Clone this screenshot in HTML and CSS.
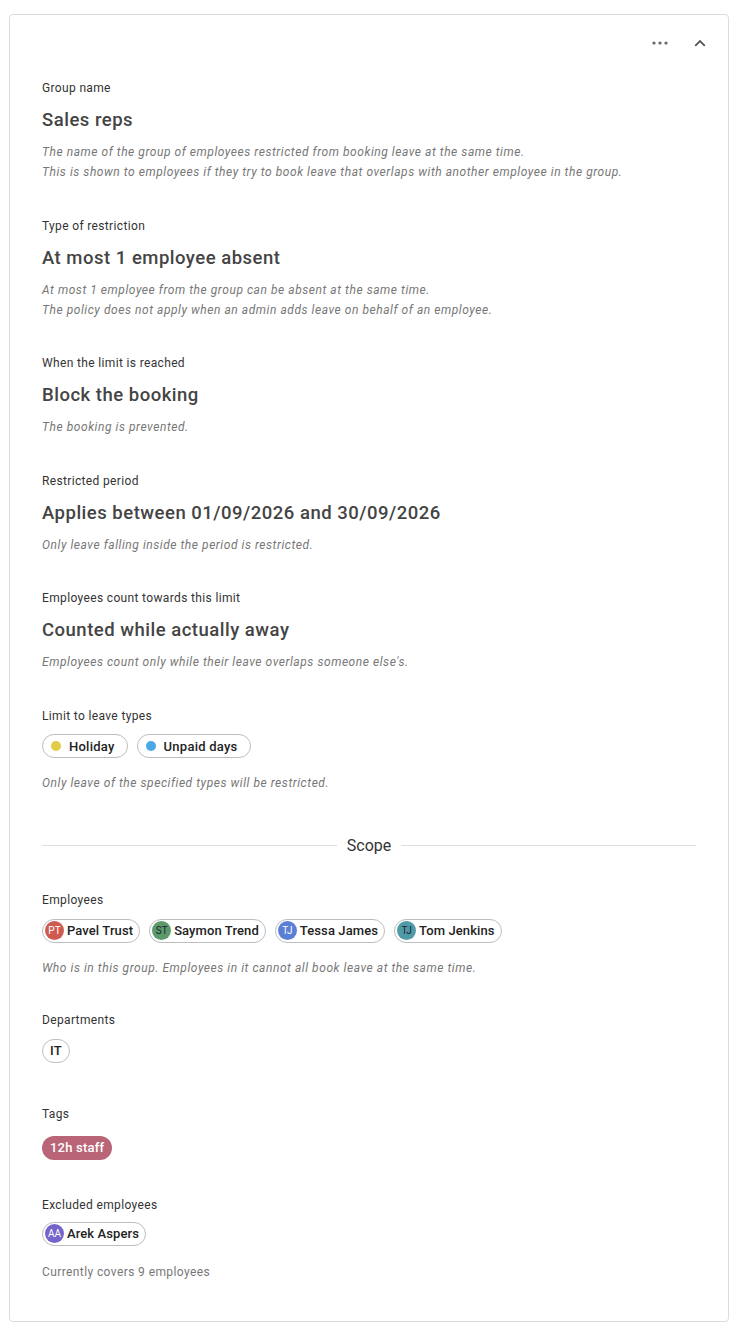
FILE: index.html
```html
<!DOCTYPE html>
<html>
<head>
<meta charset="utf-8">
<link rel="stylesheet" href="styles.css">
</head>
<body>
<div class="card">
  <div class="card-head">
    <button class="icon-btn" aria-label="More">
      <svg width="16" height="4" viewBox="0 0 16 4"><circle cx="2" cy="2" r="1.6" fill="#666"/><circle cx="8" cy="2" r="1.6" fill="#666"/><circle cx="14" cy="2" r="1.6" fill="#666"/></svg>
    </button>
    <button class="icon-btn" aria-label="Collapse">
      <svg width="12" height="8" viewBox="0 0 12 8"><path d="M1.2 6.8 L6 2 L10.8 6.8" fill="none" stroke="#555" stroke-width="1.8"/></svg>
    </button>
  </div>

  <section class="field">
    <div class="label">Group name</div>
    <div class="value">Sales reps</div>
    <div class="help">The name of the group of employees restricted from booking leave at the same time.<br>This is shown to employees if they try to book leave that overlaps with another employee in the group.</div>
  </section>

  <section class="field">
    <div class="label">Type of restriction</div>
    <div class="value">At most 1 employee absent</div>
    <div class="help">At most 1 employee from the group can be absent at the same time.<br>The policy does not apply when an admin adds leave on behalf of an employee.</div>
  </section>

  <section class="field">
    <div class="label">When the limit is reached</div>
    <div class="value">Block the booking</div>
    <div class="help">The booking is prevented.</div>
  </section>

  <section class="field">
    <div class="label">Restricted period</div>
    <div class="value">Applies between 01/09/2026 and 30/09/2026</div>
    <div class="help">Only leave falling inside the period is restricted.</div>
  </section>

  <section class="field">
    <div class="label">Employees count towards this limit</div>
    <div class="value">Counted while actually away</div>
    <div class="help">Employees count only while their leave overlaps someone else's.</div>
  </section>

  <section class="field">
    <div class="label">Limit to leave types</div>
    <div class="chips">
      <span class="chip"><span class="dot dot-yellow"></span>Holiday</span>
      <span class="chip"><span class="dot dot-blue"></span>Unpaid days</span>
    </div>
    <div class="help help-after-chips">Only leave of the specified types will be restricted.</div>
  </section>

  <div class="divider"><span>Scope</span></div>

  <section class="field">
    <div class="label">Employees</div>
    <div class="chips">
      <span class="chip chip-person"><span class="avatar av-red">PT</span>Pavel Trust</span>
      <span class="chip chip-person"><span class="avatar av-green">ST</span>Saymon Trend</span>
      <span class="chip chip-person"><span class="avatar av-blue">TJ</span>Tessa James</span>
      <span class="chip chip-person"><span class="avatar av-teal">TJ</span>Tom Jenkins</span>
    </div>
    <div class="help help-after-people">Who is in this group. Employees in it cannot all book leave at the same time.</div>
  </section>

  <section class="field field-loose">
    <div class="label">Departments</div>
    <div class="chips">
      <span class="chip chip-plain">IT</span>
    </div>
  </section>

  <section class="field field-tags">
    <div class="label">Tags</div>
    <div class="chips chips-tag">
      <span class="tag">12h staff</span>
    </div>
  </section>

  <section class="field field-last">
    <div class="label">Excluded employees</div>
    <div class="chips chips-excluded">
      <span class="chip chip-person"><span class="avatar av-purple">AA</span>Arek Aspers</span>
    </div>
    <div class="note">Currently covers 9 employees</div>
  </section>
</div>
</body>
</html>
```

FILE: styles.css
```css
* { box-sizing: border-box; }

html, body {
  margin: 0;
  padding: 0;
  background: #ffffff;
}

body {
  font-family: Roboto, "Liberation Sans", Arial, sans-serif;
  color: #333;
  padding: 14px 11px 18px 9px;
}

.card {
  border: 1px solid #dcdcdc;
  border-radius: 4px;
  padding: 12px 32px 39px 32px;
  background: #fff;
}

.card-head {
  display: flex;
  justify-content: flex-end;
  align-items: center;
  gap: 8px;
  height: 32px;
  margin-right: -20px;
}

.icon-btn {
  width: 32px;
  height: 32px;
  padding: 0;
  border: 0;
  background: transparent;
  display: flex;
  align-items: center;
  justify-content: center;
}

.field {
  margin-top: 35.6px;
}

.card-head + .field {
  margin-top: 21px;
}

.field-loose {
  margin-top: 34px;
}

.field-loose + .field {
  margin-top: 43px;
}

.field-tags + .field {
  margin-top: 37px;
}

.label {
  font-size: 12px;
  line-height: 16px;
  color: #333;
  letter-spacing: 0.35px;
}

.value {
  margin-top: 12px;
  font-size: 18.5px;
  line-height: 24px;
  font-weight: 500;
  color: #444;
  letter-spacing: 0.5px;
}

.help {
  margin-top: 10px;
  font-size: 12px;
  line-height: 20px;
  font-style: italic;
  color: #777;
  letter-spacing: 0.55px;
}

.help-after-chips {
  margin-top: 15px;
}

.help-after-people {
  margin-top: 15.5px;
}

.chips {
  margin-top: 10.5px;
  display: flex;
  flex-wrap: wrap;
  gap: 9px;
}

.chips-tag {
  margin-top: 14px;
}

.chips-excluded {
  margin-top: 9px;
}

.chip {
  display: inline-flex;
  align-items: center;
  height: 24px;
  border: 1px solid #bdbdbd;
  border-radius: 12px;
  padding: 0 12px 0 8px;
  font-size: 13px;
  font-weight: 500;
  color: #222;
  letter-spacing: 0.25px;
  background: #fff;
}

.dot {
  width: 10px;
  height: 10px;
  border-radius: 50%;
  margin-right: 8px;
}

.dot-yellow { background: #e3cc45; }
.dot-blue { background: #4aa8e6; }

.chip-person {
  padding: 0 6px 0 2px;
  letter-spacing: 0.1px;
}

.avatar {
  width: 19px;
  height: 19px;
  border-radius: 50%;
  display: inline-flex;
  align-items: center;
  justify-content: center;
  font-size: 10px;
  font-weight: 400;
  color: #fff;
  margin-right: 3px;
  letter-spacing: 0;
}

.av-red { background: #cf5a4f; }
.av-green { background: #5c9a6c; color: #223; }
.av-blue { background: #5b7fd6; }
.av-teal { background: #4f9aa6; color: #223; }
.av-purple { background: #7565c8; }

.chip-plain {
  padding: 0 7px;
}

.tag {
  display: inline-flex;
  align-items: center;
  height: 24px;
  border-radius: 12px;
  padding: 0 8px;
  background: #b96577;
  color: #fff;
  font-size: 13px;
  font-weight: 500;
  letter-spacing: 0.2px;
}

.divider {
  margin-top: 40.5px;
  display: flex;
  align-items: center;
  height: 24px;
  gap: 10px;
}

.divider::before,
.divider::after {
  content: "";
  flex: 1;
  height: 1px;
  background: #dedede;
}

.divider span {
  font-size: 16px;
  color: #333;
}

.divider + .field {
  margin-top: 34.5px;
}

.note {
  margin-top: 16.5px;
  font-size: 12px;
  line-height: 20px;
  color: #777;
  letter-spacing: 0.4px;
}
```
